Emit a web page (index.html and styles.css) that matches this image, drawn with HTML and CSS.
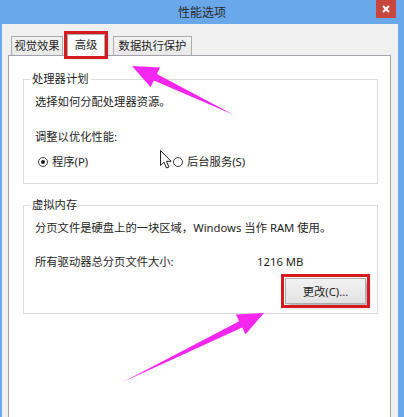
FILE: index.html
```html
<!DOCTYPE html>
<html lang="zh-CN">
<head>
<meta charset="utf-8">
<title>性能选项</title>
<link rel="stylesheet" href="styles.css">
</head>
<body>
<div class="window">
  <div class="titlebar">
    <span class="title">性能选项</span>
    <span class="close"><svg width="8" height="8" viewBox="0 0 8 8"><path d="M1 1L7 7M7 1L1 7" stroke="#fff" stroke-width="2"/></svg></span>
  </div>
  <div class="client">
    <div class="tabs">
      <div class="tab t1">视觉效果</div>
      <div class="tab t2 selected">高级</div>
      <div class="tab t3">数据执行保护</div>
    </div>
    <div class="panel">
      <fieldset class="group g1">
        <legend>处理器计划</legend>
        <p class="line">选择如何分配处理器资源。</p>
        <p class="line l2">调整以优化性能:</p>
        <div class="radios">
          <label class="radio"><span class="dot on"></span>程序(P)</label>
          <label class="radio r2">
            <svg class="cursor" width="13" height="19" viewBox="0 0 13 19"><path d="M0.5 0.5L0.5 15.5L4 12.2L6.6 18L8.9 17L6.4 11.3L11.2 11.3Z" fill="#fff" stroke="#222" stroke-width="1" stroke-linejoin="round"/></svg>
            <span class="dot"></span>后台服务(S)
          </label>
        </div>
      </fieldset>
      <fieldset class="group g2">
        <legend>虚拟内存</legend>
        <p class="line">分页文件是硬盘上的一块区域，Windows 当作 RAM 使用。</p>
        <div class="size"><span>所有驱动器总分页文件大小:</span><span>1216 MB</span></div>
        <div class="btnrow"><button class="btn">更改(C)...</button></div>
      </fieldset>
    </div>
  </div>
  <svg class="annot" width="404" height="417" viewBox="0 0 404 417">
    <polygon points="234,115 156.9,74.1 160.2,67.4 132,66 150.6,87.2 153.9,80.5" fill="#f526f0"/>
    <polygon points="123,382 242.2,327.5 245.5,334.3 264,313 235.9,314.5 239.2,321.3" fill="#f526f0"/>
  </svg>
</div>
</body>
</html>
```

FILE: styles.css
```css
html, body {
  margin: 0;
  padding: 0;
}
body {
  width: 404px;
  height: 417px;
  overflow: hidden;
  font-family: "Noto Sans", "Noto Sans CJK SC", sans-serif;
  font-size: 11.3px;
  color: #1e1e1e;
}
.window {
  position: relative;
  width: 404px;
  height: 417px;
  background: #6aa8ec;
  display: flex;
  flex-direction: column;
}
.titlebar {
  height: 24px;
  display: grid;
  grid-template-columns: 1fr auto 1fr;
  align-items: start;
}
.title {
  grid-column: 2;
  font-size: 12px;
  line-height: 26px;
  color: #2a2a2a;
}
.close {
  grid-column: 3;
  justify-self: end;
  margin-right: 8px;
  width: 20px;
  height: 18px;
  background: #c8463c;
  display: flex;
  align-items: center;
  justify-content: center;
}
.close svg { display: block; }
.client {
  flex: 1;
  margin: 0 6px 0 2px;
  background: #f0f0f0;
  display: flex;
  flex-direction: column;
}
.tabs {
  display: flex;
  align-items: flex-end;
  padding: 10px 0 0 9px;
  height: 21px;
  position: relative;
  z-index: 1;
}
.tab {
  box-sizing: border-box;
  height: 19px;
  border: 1px solid #acacac;
  border-bottom: none;
  background: linear-gradient(#f3f3f3, #e8e8e8);
  line-height: 17px;
  text-align: center;
  white-space: nowrap;
}
.t1 { width: 52px; }
.t2 {
  width: 38px;
  margin-left: 4px;
  height: 22px;
  margin-bottom: -1px;
  background: #fff;
  line-height: 20px;
  outline: 3.5px solid #d71a1f;
  box-shadow: 2px 2px 3px rgba(0,0,0,0.35);
}
.t3 { width: 79px; margin-left: 8px; }
.panel {
  flex: 1;
  margin: 0 7px 0 6px;
  background: #fff;
  border: 1px solid #a3a3ab;
  border-bottom: none;
  padding: 16px 12px 0 14px;
}
.group {
  margin: 0;
  padding: 8px 11px 13px;
  border: 1px solid #dcdcdc;
  min-width: 0;
}
.group legend {
  padding: 0 2px;
  margin-left: -5px;
  line-height: 14px;
}
.g2 {
  margin-top: 14px;
  padding-bottom: 9px;
}
.line {
  margin: 0;
  line-height: 16px;
  white-space: nowrap;
}
.l2 { margin-top: 19px; }
.radios {
  margin-top: 9px;
  height: 16px;
  display: grid;
  grid-template-columns: 135px auto;
  padding-left: 3px;
  align-items: center;
}
.radio {
  display: flex;
  align-items: center;
  gap: 4px;
  line-height: 16px;
  white-space: nowrap;
  position: relative;
}
.dot {
  box-sizing: border-box;
  width: 10px;
  height: 10px;
  border-radius: 50%;
  border: 1px solid #3c3c3c;
  background: #fff;
  display: flex;
  align-items: center;
  justify-content: center;
}
.dot.on::after {
  content: "";
  width: 4px;
  height: 4px;
  border-radius: 50%;
  background: #1e1e1e;
}
.cursor {
  position: absolute;
  left: -13px;
  top: -4px;
}
.size {
  margin-top: 18px;
  display: grid;
  grid-template-columns: 222px auto;
  line-height: 16px;
  white-space: nowrap;
}
.btnrow {
  margin-top: 8px;
  display: flex;
  justify-content: flex-end;
}
.btn {
  box-sizing: border-box;
  width: 81px;
  height: 26px;
  border: 1px solid #acacac;
  background: linear-gradient(#f2f2f2, #e3e3e3);
  font-family: "Noto Sans", "Noto Sans CJK SC", sans-serif;
  font-size: 11.3px;
  color: #1e1e1e;
  padding: 0;
  outline: 3px solid #d71a1f;
  outline-offset: 1px;
  box-shadow: 3px 3px 4px rgba(0,0,0,0.3);
}
.annot {
  position: absolute;
  left: 0;
  top: 0;
  pointer-events: none;
}
```
